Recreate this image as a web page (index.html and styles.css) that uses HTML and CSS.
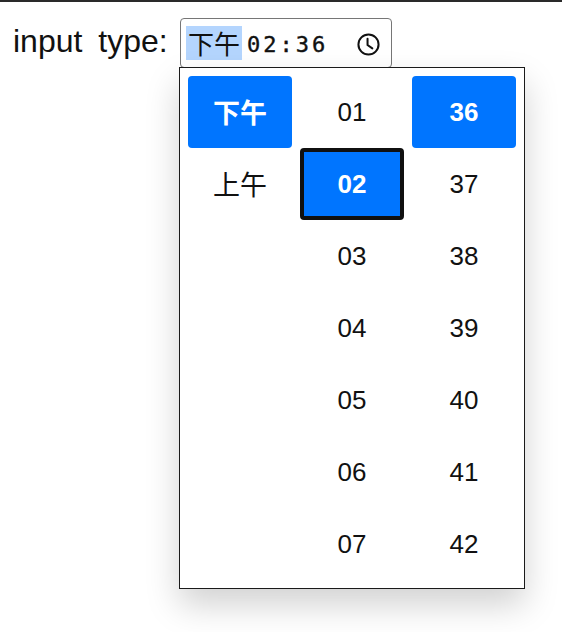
FILE: index.html
```html
<!DOCTYPE html>
<html lang="zh">
<head>
    <meta charset="UTF-8">
    <meta name="viewport" content="width=device-width, initial-scale=1.0">
    <title>input type time</title>
    <link rel="stylesheet" href="styles.css">
</head>
<body>
    <div class="topline"></div>
    <div class="row">
        <span class="label">input type:</span>
        <div class="field">
            <span class="ampm">下午</span>
            <span class="time">02:36</span>
            <svg class="clock" width="23" height="23" viewBox="0 0 24 24" fill="none" stroke="#111" stroke-width="2.1" stroke-linecap="round">
                <circle cx="12" cy="12" r="10.5"/>
                <path d="M11 6v6.5l5 3.5"/>
            </svg>
            <!-- Desplegable -->
            <div class="picker">
                <div class="cell cjk selected">下午</div>
                <div class="cell">01</div>
                <div class="cell selected">36</div>
                <div class="cell cjk">上午</div>
                <div class="cell selected focused">02</div>
                <div class="cell">37</div>
                <div class="cell"></div>
                <div class="cell">03</div>
                <div class="cell">38</div>
                <div class="cell"></div>
                <div class="cell">04</div>
                <div class="cell">39</div>
                <div class="cell"></div>
                <div class="cell">05</div>
                <div class="cell">40</div>
                <div class="cell"></div>
                <div class="cell">06</div>
                <div class="cell">41</div>
                <div class="cell"></div>
                <div class="cell">07</div>
                <div class="cell">42</div>
            </div>
        </div>
    </div>
</body>
</html>
```
FILE: styles.css
```css
body {
    margin: 0;
    min-height: 632px;
    font-family: "Liberation Sans", "Noto Sans CJK SC", sans-serif;
    color: #111;
    background: #fff;
}
.topline {
    height: 2px;
    background: #2a2a2a;
}
.row {
    display: flex;
    align-items: center;
    padding: 16px 0 0 13px;
}
.label {
    width: 167px;
    margin-bottom: 4px;
    font-size: 32px;
    word-spacing: 7px;
    white-space: nowrap;
}
.field {
    position: relative;
    display: flex;
    align-items: center;
    box-sizing: border-box;
    width: 212px;
    height: 50px;
    padding: 0 11px 0 5px;
    border: 1px solid #767676;
    border-radius: 4px;
}
.ampm {
    padding: 0 2px;
    font-family: "Noto Sans CJK SC", sans-serif;
    font-size: 26px;
    line-height: 34px;
    background: #b4d5fe;
}
.time {
    margin: 2px 0 0 5px;
    font-family: "DejaVu Sans Mono", monospace;
    font-size: 22px;
    -webkit-text-stroke: 0.4px #111;
    letter-spacing: 3px;
}
.clock {
    margin: 3px 0 0 auto;
}
.picker {
    position: absolute;
    top: 48px;
    left: -2px;
    box-sizing: border-box;
    width: 346px;
    display: grid;
    grid-template-columns: repeat(3, 104px);
    grid-auto-rows: 72px;
    column-gap: 8px;
    padding: 8px;
    background: #fff;
    border: 1px solid #1a1a1a;
    box-shadow: 0 16px 32px rgba(0, 0, 0, 0.18);
}
.cell {
    display: flex;
    align-items: center;
    justify-content: center;
    box-sizing: border-box;
    font-size: 26px;
    border-radius: 4px;
}
.cjk {
    padding-bottom: 2px;
    font-family: "Noto Sans CJK SC", sans-serif;
    font-size: 27px;
}
.selected {
    background: #0075ff;
    color: #fff;
    font-weight: bold;
}
.focused {
    border: 4px solid #101010;
}
```
